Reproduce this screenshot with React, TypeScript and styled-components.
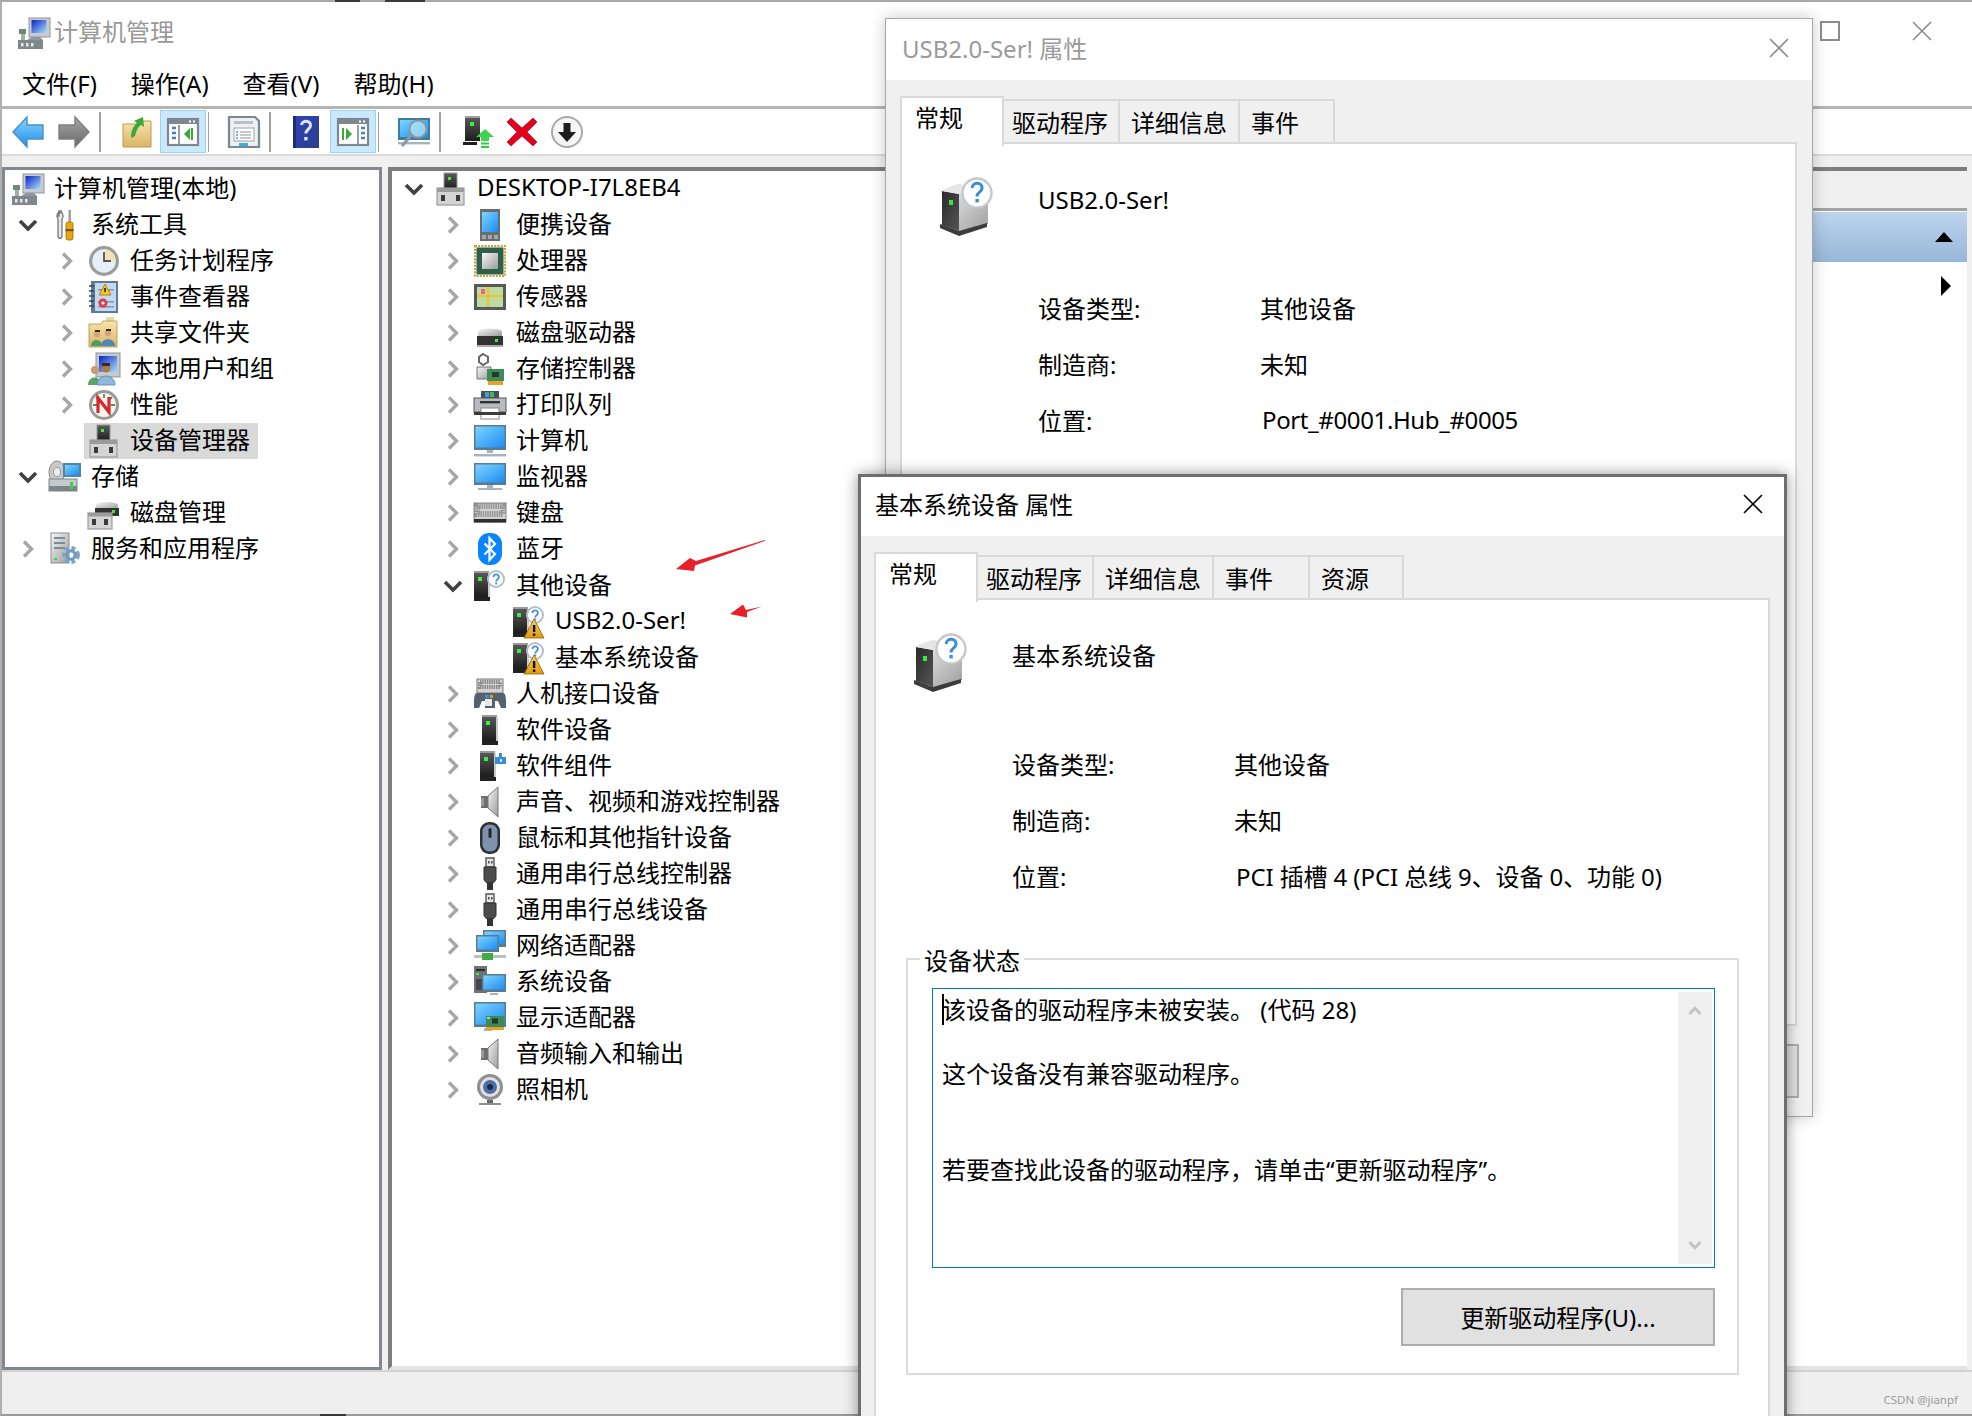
import React from "react";
import styled, { createGlobalStyle } from "styled-components";

const Global = createGlobalStyle`
  html, body { margin: 0; padding: 0; background: #fff; }
  body { font-family: "Noto Sans", "Noto Sans CJK SC", sans-serif; font-size: 24px; color: #000; }
  #root { width: 1972px; height: 1416px; overflow: hidden; }
  * { box-sizing: border-box; }
`;

const Desktop = styled.div`
  position: relative;
  width: 1972px;
  height: 1416px;
  overflow: hidden;
  background: #fff;
`;

const MainWindow = styled.div`
  display: flex;
  flex-direction: column;
  width: 100%;
  height: 100%;
  border-top: 2px solid #a9a9a9;
  border-left: 2px solid #b0b0b0;
  border-bottom: 2px solid #9a9a9a;
`;

const TitleBar = styled.div`
  display: flex;
  align-items: center;
  flex: none;
  height: 62px;
  padding: 0 40px 0 16px;
  color: #999;
  gap: 4px;
`;

const Caption = styled.span<{ $lift?: number }>`
  margin-bottom: ${(p) => p.$lift ?? 0}px;
`;

const WindowControls = styled.div`
  display: flex;
  align-items: center;
  gap: 72px;
  margin-left: auto;
  margin-top: -4px;
`;

const MaxBox = styled.div`
  width: 20px;
  height: 20px;
  border: 2px solid #8c8c8c;
`;

const MenuBar = styled.div`
  display: flex;
  flex: none;
  align-items: center;
  gap: 34px;
  height: 45px;
  padding: 0 0 5px 20px;
  border-bottom: 3px solid #b4b4b4;
`;

const Toolbar = styled.div`
  display: flex;
  flex: none;
  align-items: center;
  height: 47px;
  padding-left: 3px;
  border-bottom: 2px solid #dadada;
`;

const ToolButton = styled.div<{ $active?: boolean; $w?: number }>`
  display: flex;
  align-items: center;
  justify-content: center;
  flex: none;
  width: ${(p) => p.$w ?? 46}px;
  height: 43px;
  background: ${(p) => (p.$active ? "#cce8ff" : "transparent")};
  border: 1px solid ${(p) => (p.$active ? "#99d1ff" : "transparent")};
`;

const ToolSep = styled.div<{ $r?: number }>`
  flex: none;
  width: 1.5px;
  height: 40px;
  margin: 0 ${(p) => p.$r ?? 12}px 0 2px;
  background: #a0a0a0;
`;

const PaneArea = styled.div`
  display: flex;
  flex: 1;
  min-height: 0;
  gap: 6px;
  padding-top: 11px;
  background: #f0f0f0;
`;

const LeftPane = styled.div`
  flex: none;
  width: 380px;
  background: #fff;
  border: 3px solid #828790;
  padding-top: 1px;
`;

const RightPane = styled.div`
  display: flex;
  flex: 1;
  margin-right: 5px;
  background: #fff;
  border-top: 4px solid #7d7d7d;
  border-left: 4px solid #7f7f7f;
  border-bottom: 4px solid #e3e3e3;
`;

const DeviceTree = styled.div`
  flex: 1;
`;

const ActionPane = styled.div`
  flex: none;
  width: 300px;
  display: flex;
  flex-direction: column;
`;

const ActionTop = styled.div`
  flex: none;
  height: 40px;
  background: #f0f0f0;
  border-bottom: 3px solid #a3a3a3;
`;

const ActionHeader = styled.div`
  display: flex;
  align-items: center;
  justify-content: flex-end;
  flex: none;
  height: 50px;
  padding-right: 14px;
  margin-top: 1px;
  background: linear-gradient(#bcd4ee, #98b6d8);
`;

const ActionRow = styled.div`
  display: flex;
  align-items: center;
  justify-content: flex-end;
  height: 46px;
  padding: 0 16px 0 0;
`;

const TriUp = styled.div`
  width: 0;
  height: 0;
  border-left: 9px solid transparent;
  border-right: 9px solid transparent;
  border-bottom: 10px solid #000;
`;

const TriRight = styled.div`
  width: 0;
  height: 0;
  border-top: 10px solid transparent;
  border-bottom: 10px solid transparent;
  border-left: 10px solid #000;
  margin-top: 2px;
`;

const StatusBar = styled.div`
  position: relative;
  flex: none;
  height: 44px;
  background: #efefef;
  border-top: 2px solid #d2d2d2;
`;

const Watermark = styled.div`
  position: absolute;
  right: 14px;
  top: 20px;
  font-size: 11.5px;
  line-height: 16px;
  color: #9c9c9c;
`;

const Row = styled.div<{ $pad: number }>`
  display: flex;
  align-items: center;
  height: 36.06px;
  margin-left: ${(p) => p.$pad}px;
  white-space: nowrap;
`;

const ChevBox = styled.div`
  display: flex;
  align-items: center;
  justify-content: center;
  flex: none;
  width: 24px;
  height: 24px;
`;

const Label = styled.div<{ $selected?: boolean }>`
  display: flex;
  align-items: center;
  gap: 10px;
  height: 36px;
  margin-left: 5px;
  padding: 0 8px 0 4px;
  background: ${(p) => (p.$selected ? "#d9d9d9" : "transparent")};
`;

const Svg = styled.svg<{ $w?: number; $h?: number }>`
  display: block;
  flex: none;
  width: ${(p) => p.$w ?? 32}px;
  height: ${(p) => p.$h ?? 32}px;
  overflow: visible;
`;

const DefsHolder = styled.svg`
  position: absolute;
  width: 0;
  height: 0;
`;

const Annotations = styled.svg`
  position: absolute;
  left: 670px;
  top: 530px;
  width: 100px;
  height: 95px;
`;

const EdgeMark = styled.div<{ $x: number; $w: number; $top?: boolean }>`
  position: absolute;
  left: ${(p) => p.$x}px;
  ${(p) => (p.$top ? "top: 0;" : "bottom: 0;")}
  width: ${(p) => p.$w}px;
  height: 2px;
  background: #3a3a3a;
`;

const Dialog = styled.div<{ $x: number; $y: number; $w: number; $h: number; $active?: boolean }>`
  position: absolute;
  left: ${(p) => p.$x}px;
  top: ${(p) => p.$y}px;
  width: ${(p) => p.$w}px;
  height: ${(p) => p.$h}px;
  display: flex;
  flex-direction: column;
  background: #f0f0f0;
  border: ${(p) => (p.$active ? "3px solid #6e6e6e" : "1px solid #a6a6a6")};
  box-shadow: 0 0 14px rgba(0, 0, 0, ${(p) => (p.$active ? 0.42 : 0.22)});
`;

const DialogTitle = styled.div<{ $active?: boolean }>`
  display: flex;
  align-items: center;
  justify-content: space-between;
  flex: none;
  height: ${(p) => (p.$active ? 59 : 61)}px;
  padding: 0 ${(p) => (p.$active ? 21 : 23)}px 0 ${(p) => (p.$active ? 14 : 16)}px;
  background: #fff;
  color: ${(p) => (p.$active ? "#000" : "#9a9a9a")};
`;

const CloseWrap = styled.div<{ $active?: boolean }>`
  margin-bottom: ${(p) => (p.$active ? 5 : 3)}px;
`;

const DialogBody = styled.div<{ $active?: boolean }>`
  display: flex;
  flex-direction: column;
  flex: 1;
  min-height: 0;
  padding: 16px ${(p) => (p.$active ? 14 : 15)}px 0 ${(p) => (p.$active ? 13 : 14)}px;
`;

const Tabs = styled.div`
  display: flex;
  align-items: flex-end;
  flex: none;
  height: 48px;
  position: relative;
  z-index: 1;
  margin-bottom: -2px;
`;

const Tab = styled.div<{ $w: number; $selected?: boolean }>`
  flex: none;
  width: ${(p) => p.$w}px;
  height: ${(p) => (p.$selected ? 50 : 45)}px;
  margin-bottom: ${(p) => (p.$selected ? -2 : 0)}px;
  padding: ${(p) => (p.$selected ? "2px 0 0 13px" : "4px 0 0 11px")};
  line-height: 36px;
  background: ${(p) => (p.$selected ? "#fff" : "#f0f0f0")};
  border: 2px solid #d9d9d9;
  border-left-width: ${(p) => (p.$selected ? 2 : 0)}px;
  border-bottom: ${(p) => (p.$selected ? "none" : "2px solid #d9d9d9")};
  white-space: nowrap;
  &:nth-child(2) {
    padding-left: 8px;
  }
`;

const TabPanel = styled.div<{ $h?: number }>`
  flex: ${(p) => (p.$h ? "none" : "1")};
  height: ${(p) => (p.$h ? `${p.$h}px` : "auto")};
  padding: 31px 0 0 38px;
  background: #fff;
  border: 2px solid #d9d9d9;
  min-height: 0;
`;

const DeviceHeader = styled.div`
  display: flex;
  align-items: flex-start;
  gap: 44px;
  height: 60px;
  line-height: 32px;
`;

const DeviceIcon = styled.div`
  margin-top: 2px;
`;

const DeviceName = styled.div`
  margin-top: 9px;
`;

const PropGrid = styled.div`
  display: grid;
  grid-template-columns: 222px 1fr;
  grid-auto-rows: 56px;
  align-items: center;
  margin: 44px 0 0 98px;
`;

const PropValue = styled.div<{ $nudge?: boolean; $tight?: number }>`
  padding-left: ${(p) => (p.$nudge ? 2 : 0)}px;
  letter-spacing: ${(p) => p.$tight ?? 0}px;
  white-space: nowrap;
`;

const StatusGroup = styled.fieldset`
  margin: 40px 29px 0 -8px;
  padding: 0 22px 27px 24px;
  border: 2px solid #dcdcdc;
`;

const StatusLegend = styled.legend`
  margin-left: -12px;
  padding: 4px 4px 0;
  line-height: 28px;
`;

const StatusBox = styled.div`
  position: relative;
  display: flex;
  height: 280px;
  margin-top: 13px;
  padding: 3px 2px 3px 3px;
  border: 1px solid #0078d7;
  background: #fff;
`;

const StatusText = styled.div`
  flex: 1;
  padding: 2px 0 0 6px;
  line-height: 32px;
  white-space: pre;
`;

const Caret = styled.div`
  position: absolute;
  left: 9px;
  top: 5px;
  width: 2px;
  height: 31px;
  background: #000;
`;

const ScrollTrack = styled.div`
  display: flex;
  flex-direction: column;
  justify-content: space-between;
  align-items: center;
  flex: none;
  width: 34px;
  padding: 12px 0;
  background: #f0f0f0;
`;

const Actions = styled.div`
  display: flex;
  justify-content: flex-end;
  margin-top: 20px;
`;

const PushButton = styled.div`
  display: flex;
  align-items: center;
  justify-content: center;
  width: 314px;
  height: 58px;
  padding-bottom: 2px;
  background: #e1e1e1;
  border: 2px solid #adadad;
`;

const FooterRow = styled.div`
  display: flex;
  justify-content: flex-end;
  flex: none;
  height: 91px;
  padding: 18px 0 0;
`;

const FooterButton = styled.div`
  width: 140px;
  height: 54px;
  margin-right: -2px;
  background: #e1e1e1;
  border: 2px solid #adadad;
`;

const Defs = () => (
  <DefsHolder>
    <defs>
      <linearGradient id="scr" x1="0" y1="0" x2="1" y2="1">
        <stop offset="0" stopColor="#7fd4ff" />
        <stop offset="1" stopColor="#1b8cf0" />
      </linearGradient>
      <linearGradient id="silver" x1="0" y1="0" x2="1" y2="1">
        <stop offset="0" stopColor="#f6f6f6" />
        <stop offset="1" stopColor="#9c9c9c" />
      </linearGradient>
      <linearGradient id="dark" x1="0" y1="0" x2="0" y2="1">
        <stop offset="0" stopColor="#5c5c5c" />
        <stop offset="1" stopColor="#1c1c1c" />
      </linearGradient>
      <linearGradient id="tan" x1="0" y1="0" x2="0" y2="1">
        <stop offset="0" stopColor="#f8e4ac" />
        <stop offset="1" stopColor="#dcb465" />
      </linearGradient>
      <linearGradient id="blueDeep" x1="0" y1="0" x2="1" y2="1">
        <stop offset="0" stopColor="#0a22c8" />
        <stop offset="1" stopColor="#a8e0f8" />
      </linearGradient>
      <linearGradient id="arrowBlue" x1="0" y1="0" x2="0" y2="1">
        <stop offset="0" stopColor="#8ad6ff" />
        <stop offset="1" stopColor="#1e8ee8" />
      </linearGradient>
      <linearGradient id="arrowGrey" x1="0" y1="0" x2="0" y2="1">
        <stop offset="0" stopColor="#a8a8a8" />
        <stop offset="1" stopColor="#666" />
      </linearGradient>
      <linearGradient id="helpBlue" x1="0" y1="0" x2="1" y2="1">
        <stop offset="0" stopColor="#2f44b8" />
        <stop offset="1" stopColor="#2a3f8c" />
      </linearGradient>
      <linearGradient id="towerFront" x1="0" y1="0" x2="1" y2="1">
        <stop offset="0" stopColor="#2a2a2a" />
        <stop offset="1" stopColor="#555" />
      </linearGradient>
      <linearGradient id="warnFill" x1="0" y1="0" x2="0" y2="1">
        <stop offset="0" stopColor="#f9d060" />
        <stop offset="1" stopColor="#e09a10" />
      </linearGradient>
    </defs>
  </DefsHolder>
);

const Tower = ({ x = 8 }: { x?: number }) => (
  <g transform={`translate(${x} 1)`}>
    <rect width="15" height="26" fill="url(#dark)" />
    <rect width="15" height="2" fill="#9a9a9a" />
    <rect x="4" y="6" width="4" height="4" fill="#3bf03b" />
    <rect y="26" width="16" height="4" fill="#222" />
    <rect x="14" y="2" width="2" height="24" fill="#c9c9c9" />
  </g>
);

const Bubble = () => (
  <g>
    <circle cx="22" cy="9" r="8" fill="#fff" stroke="#b4bec8" strokeWidth="2" />
    <path d="M19.4 7c.4-3.6 5.8-3.4 5.5.2-.2 2.1-2.7 1.9-2.7 4.2" fill="none" stroke="#4a90d9" strokeWidth="1.9" />
    <rect x="21.2" y="12.4" width="2" height="2" fill="#4a90d9" />
  </g>
);

const Warn = () => (
  <g>
    <path d="M21 13l10 19H11z" fill="url(#warnFill)" stroke="#8a6000" strokeWidth=".8" />
    <rect x="19.9" y="19" width="2.4" height="7" fill="#111" />
    <rect x="19.9" y="27.5" width="2.4" height="2.4" fill="#111" />
  </g>
);

const Monitor = ({ x = 0, y = 0, w = 32, h = 24 }: { x?: number; y?: number; w?: number; h?: number }) => (
  <g>
    <rect x={x} y={y} width={w} height={h} fill="#5a7a90" />
    <rect x={x + 1.5} y={y + 1.5} width={w - 3} height={h - 4} fill="url(#scr)" />
  </g>
);

const Pcicard = ({ x, y }: { x: number; y: number }) => (
  <g transform={`translate(${x} ${y})`}>
    <rect width="18" height="11" fill="#3f8a58" />
    <rect x="6" y="2.5" width="6" height="5" fill="#1e3c2a" />
    <rect x="1" y="1" width="3" height="2" fill="#9ce0a8" />
    <rect y="11" width="18" height="3" fill="#e7a22c" />
  </g>
);

const Gear = ({ x, y, r = 6 }: { x: number; y: number; r?: number }) => (
  <g transform={`translate(${x} ${y})`}>
    <circle r={r} fill="none" stroke="#7ba4c8" strokeWidth={r * 0.55} strokeDasharray={`${r * 0.55} ${r * 0.4}`} />
    <circle r={r * 0.6} fill="none" stroke="#6e9cc0" strokeWidth={r * 0.45} />
  </g>
);

const MgmtGlyph = () => (
  <>
    <rect x="11" y="1" width="21" height="19" fill="#c8ccd0" stroke="#8d9499" />
    <rect x="13.5" y="3" width="15" height="13" fill="url(#blueDeep)" />
    <path d="M14 20l-5 3h16l-3-3z" fill="#8f989c" />
    <rect x="0" y="23" width="25" height="9" fill="#7e878c" />
    <rect x="3" y="26" width="2.5" height="3.5" fill="#e8e8e8" />
    <rect x="8" y="26" width="2.5" height="3.5" fill="#e8e8e8" />
    <rect x="13" y="26" width="2.5" height="3.5" fill="#e8e8e8" />
    <rect x="1" y="12" width="7" height="5" fill="#6e8a76" />
    <rect x="3" y="17" width="4" height="6" fill="#9fb2a4" />
  </>
);

const DesktopBase = () => (
  <>
    <rect x="9" y="0" width="13" height="16" fill="url(#dark)" stroke="#999" strokeWidth="1" />
    <rect x="13" y="4" width="3" height="3" fill="#3bf03b" />
    <rect x="2" y="15" width="27" height="17" fill="#d4d4d4" stroke="#9b9b9b" strokeWidth="1.2" />
    <rect x="2" y="15" width="27" height="4" fill="#9b9b9b" />
    <rect x="6" y="22" width="4" height="6" fill="#3a3a3a" />
    <rect x="21" y="22" width="4" height="6" fill="#3a3a3a" />
  </>
);

const Speaker = () => (
  <>
    <path d="M7 10h7v12H7z" fill="#6d6d6d" />
    <path d="M14 10L24 1v30L14 22z" fill="url(#silver)" stroke="#777" strokeWidth="1" />
    <rect x="7" y="12" width="3" height="8" fill="#9a9a9a" />
  </>
);

const UsbPlug = () => (
  <>
    <path d="M12 0h8v9h-8z" fill="#e6e6e6" stroke="#555" strokeWidth="1.4" />
    <rect x="14" y="3" width="1.6" height="2.5" fill="#555" />
    <rect x="17" y="3" width="1.6" height="2.5" fill="#555" />
    <path d="M10 9h12v12c0 2-2 3-3 4h-6c-1-1-3-2-3-4z" fill="#4c4c4c" stroke="#2e2e2e" />
    <rect x="13" y="24" width="6" height="8" fill="#333" />
  </>
);

type IconName = keyof typeof glyphs;

const glyphs = {
  mgmt: <MgmtGlyph />,
  tools: (
    <>
      <path d="M12 2c-4 1-5 5-3 8v17c0 3 4 3 4 0V10c2-3 1-7-3-8v5h-1z" fill="#e8e8e8" stroke="#777" strokeWidth="1.3" />
      <rect x="19.5" y="1" width="2.4" height="12" fill="#9a9a9a" />
      <rect x="17" y="13" width="7" height="18" rx="2" fill="#e8a80c" stroke="#9a6a00" strokeWidth=".8" />
      <rect x="16.5" y="20" width="8" height="2.2" fill="#7a5300" />
    </>
  ),
  clock: (
    <>
      <circle cx="16" cy="16" r="15" fill="#9c9c9c" />
      <circle cx="16" cy="16" r="11.8" fill="#e6f0f8" />
      <path d="M16 4.2a11.8 11.8 0 0 1 11.8 11.8H16z" fill="#f3e2b8" />
      <path d="M16 7v9h7" fill="none" stroke="#555" strokeWidth="1.8" />
    </>
  ),
  log: (
    <>
      <rect x="3" y="0" width="27" height="32" fill="#5a7a9e" />
      <rect x="7" y="2" width="21" height="28" fill="#c6d8ee" />
      <rect x="10" y="8" width="16" height="1.6" fill="#7f9cc0" />
      <rect x="10" y="20" width="16" height="1.6" fill="#7f9cc0" />
      <rect x="10" y="25" width="16" height="1.6" fill="#7f9cc0" />
      <path d="M17 3l6 11H11z" fill="#f5c518" stroke="#9a7a00" strokeWidth=".8" />
      <rect x="16.2" y="7" width="1.6" height="4" fill="#222" />
      <circle cx="15" cy="22" r="4.5" fill="#d8404a" />
      <circle cx="15" cy="22" r="1.6" fill="#fff" />
      <path d="M1 5h5M1 10h5M1 15h5M1 20h5M1 25h5" stroke="#444" strokeWidth="1.4" />
    </>
  ),
  shared: (
    <>
      <path d="M18 0h8v7h-8z" fill="#e8d9a8" />
      <path d="M1 7h12l2-3h14v26H1z" fill="url(#tan)" stroke="#b39248" strokeWidth=".8" />
      <circle cx="9" cy="17" r="3.2" fill="#d4a27c" />
      <path d="M3 29c0-8 11-8 11 0z" fill="#4d9e62" />
      <circle cx="20" cy="16" r="3.2" fill="#d4a27c" />
      <path d="M13 29c0-9 14-9 14 0z" fill="#4f86b8" />
      <rect x="7" y="13" width="5" height="2" fill="#3a2a1c" />
      <rect x="18" y="12" width="5" height="2" fill="#3a2a1c" />
    </>
  ),
  users: (
    <>
      <rect x="8" y="0" width="24" height="24" fill="#c4cbd0" stroke="#8d9499" />
      <rect x="11" y="3" width="18" height="16" fill="url(#blueDeep)" />
      <circle cx="7" cy="17" r="4" fill="#c99a72" />
      <path d="M0 32c0-10 13-10 13 0z" fill="#5aa564" />
      <circle cx="18" cy="15" r="4.5" fill="#a87650" />
      <rect x="14" y="10" width="8" height="3" fill="#3a2a1c" />
      <path d="M9 32c0-12 18-12 18 0z" fill="#8fb8dc" stroke="#5c86ac" strokeWidth=".8" />
    </>
  ),
  perf: (
    <>
      <circle cx="16" cy="16" r="15" fill="#9a9a9a" />
      <circle cx="16" cy="16" r="12" fill="#f5f5ee" />
      <path d="M8 8l3 3M24 8l-3 3M16 5v4M5 16h4M27 16h-4" stroke="#5a8a5e" strokeWidth="1.8" />
      <path d="M10 24V9l11 14V8" fill="none" stroke="#d8262c" strokeWidth="3.2" />
    </>
  ),
  devmgr: <DesktopBase />,
  storage: (
    <>
      <ellipse cx="8" cy="11" rx="8" ry="11" fill="#c9c9c9" stroke="#8a8a8a" />
      <ellipse cx="8" cy="11" rx="3.5" ry="4.5" fill="#eee" stroke="#999" />
      <rect x="14" y="2" width="18" height="14" fill="#4e86a8" />
      <rect x="16" y="4" width="14" height="10" fill="url(#scr)" />
      <rect x="0" y="18" width="28" height="12" fill="#c6cacc" stroke="#7c858b" />
      <rect x="0" y="25" width="28" height="5" fill="#7c858b" />
      <rect x="21" y="21" width="3" height="7" fill="#3ed24e" />
    </>
  ),
  disk: (
    <>
      <path d="M8 8c1-4 21-4 22 0v4H8z" fill="url(#silver)" />
      <rect x="7" y="11" width="24" height="8" fill="#333" />
      <rect x="24" y="13" width="3" height="3" fill="#3bf03b" />
      <rect x="0" y="16" width="24" height="16" fill="#d4d4d4" stroke="#9b9b9b" strokeWidth="1.2" />
      <rect x="0" y="16" width="24" height="3.5" fill="#9b9b9b" />
      <rect x="4" y="22" width="4" height="6" fill="#3a3a3a" />
      <rect x="16" y="22" width="4" height="6" fill="#3a3a3a" />
    </>
  ),
  services: (
    <>
      <rect x="2" y="0" width="18" height="30" fill="url(#silver)" stroke="#8a8f94" />
      <rect x="5" y="4" width="11" height="2" fill="#7b8b98" />
      <rect x="5" y="9" width="11" height="2" fill="#7b8b98" />
      <rect x="5" y="14" width="11" height="2" fill="#7b8b98" />
      <rect x="5" y="25" width="3" height="2" fill="#3ed24e" />
      <Gear x={22} y={22} r={7} />
    </>
  ),
  portable: (
    <>
      <rect x="6" y="0" width="20" height="32" fill="#666d73" />
      <rect x="8" y="3" width="16" height="20" fill="url(#scr)" />
      <rect x="8" y="26" width="4" height="4" fill="#a6a6a6" />
      <rect x="14" y="26" width="4" height="4" fill="#a6a6a6" />
      <rect x="20" y="26" width="4" height="4" fill="#a6a6a6" />
    </>
  ),
  cpu: (
    <>
      <rect x="1" y="1" width="30" height="30" fill="none" stroke="#c8a030" strokeWidth="2" strokeDasharray="2 1.2" />
      <rect x="2.5" y="2.5" width="27" height="27" fill="#2f5f48" />
      <rect x="8" y="8" width="16" height="16" fill="url(#silver)" />
    </>
  ),
  sensor: (
    <>
      <rect x="0" y="3" width="32" height="26" fill="#55595c" />
      <rect x="3" y="6" width="26" height="20" fill="#bfdca0" />
      <path d="M3 15h26M14 6v20" stroke="#e6c240" strokeWidth="2.4" />
      <rect x="7" y="8" width="4" height="5" fill="#e86a6a" />
    </>
  ),
  drive: (
    <>
      <path d="M4 14c2-3 22-3 24 0v5H4z" fill="url(#silver)" />
      <rect x="3" y="19" width="26" height="9" fill="#323232" />
      <rect x="21" y="22" width="3" height="3" fill="#3bf03b" />
      <rect x="3" y="28" width="26" height="2" fill="#aaa" />
    </>
  ),
  storctl: (
    <>
      <path d="M9 1l5 3v5l-5 3-4-3V4z" fill="#fff" stroke="#666" strokeWidth="2" />
      <path d="M3 14h14v12H3z" fill="url(#silver)" stroke="#777" />
      <rect x="13" y="16" width="17" height="12" fill="#3f8a58" />
      <rect x="18" y="19" width="7" height="5" fill="#1e3c2a" />
      <rect x="14" y="28" width="15" height="4" fill="#e7a22c" />
    </>
  ),
  printer: (
    <>
      <rect x="7" y="2" width="18" height="9" fill="#4a4f54" />
      <rect x="11" y="3" width="4" height="5" fill="#3b9ee6" />
      <rect x="16" y="3" width="4" height="5" fill="#3bb868" />
      <rect x="0" y="9" width="32" height="14" fill="#b8bcc0" stroke="#555" />
      <rect x="6" y="12" width="20" height="2.4" fill="#333" />
      <rect x="7" y="19" width="18" height="11" fill="#fff" stroke="#888" />
      <rect x="0" y="23" width="32" height="3" fill="#3c3c3c" />
    </>
  ),
  computer: (
    <>
      <Monitor h={25} />
      <rect x="13" y="25" width="6" height="3" fill="#a8b4bc" />
      <rect x="0" y="29" width="32" height="2.4" fill="#a8b4bc" />
    </>
  ),
  monitor: (
    <>
      <Monitor y={2} h={22} />
      <rect x="13" y="24" width="6" height="3" fill="#a8b4bc" />
      <rect x="4" y="27" width="24" height="2" fill="#a8b4bc" />
    </>
  ),
  keyboard: (
    <>
      <rect x="0" y="6" width="32" height="19" fill="#d2d2d2" stroke="#8a8a8a" />
      <rect x="3" y="9" width="26" height="8" fill="none" stroke="#777" strokeWidth="6" strokeDasharray="1.4 .9" opacity=".7" />
      <rect x="0" y="22" width="32" height="3.5" fill="#2e2e2e" />
    </>
  ),
  bluetooth: (
    <>
      <rect x="4" y="0" width="24" height="32" rx="11" fill="#0a84ff" />
      <path d="M10.5 10.5L21 21l-5.5 6V5l5.5 6L10.5 21.5" fill="none" stroke="#fff" strokeWidth="2.2" />
    </>
  ),
  other: (
    <>
      <Tower x={0} />
      <Bubble />
    </>
  ),
  warn: (
    <>
      <Tower x={0} />
      <Bubble />
      <Warn />
    </>
  ),
  hid: (
    <>
      <rect x="3" y="1" width="26" height="14" fill="#d2d2d2" stroke="#7c7c7c" />
      <rect x="6" y="4" width="20" height="5" fill="none" stroke="#666" strokeWidth="4" strokeDasharray="1.4 .9" opacity=".7" />
      <path d="M3 15h26c2 0 3 3 3 9v6h-5l-3-7h-3v7h-10v-7H8l-3 7H0v-6c0-6 1-9 3-9z" fill="#55616b" />
      <rect x="11" y="17" width="4" height="3" fill="#3a8ee0" />
      <rect x="16" y="17" width="3" height="3" fill="#e2a030" />
      <rect x="11" y="21" width="7" height="7" fill="#e8e8e8" />
    </>
  ),
  soft: <Tower x={8} />,
  softComp: (
    <>
      <Tower x={6} />
      <path d="M21 7h4V3h3v4h4v7H21z" fill="#3a8ed8" />
      <rect x="26" y="9" width="2" height="3" fill="#cde6fa" />
    </>
  ),
  speaker: <Speaker />,
  mouse: (
    <>
      <rect x="6" y="0" width="20" height="32" rx="9" fill="#2d3034" />
      <rect x="8.5" y="2.5" width="15" height="27" rx="7" fill="#7f92ab" />
      <rect x="14.5" y="6" width="3" height="10" rx="1.5" fill="#20232a" />
    </>
  ),
  usb: <UsbPlug />,
  network: (
    <>
      <Monitor x={9} y={0} w={23} h={17} />
      <Monitor x={2} y={5} w={23} h={17} />
      <rect x="0" y="25" width="32" height="3" fill="#b8c4ba" />
      <rect x="8" y="23" width="11" height="7" fill="#3eaa48" />
    </>
  ),
  system: (
    <>
      <rect x="0" y="0" width="13" height="27" fill="#6e7276" />
      <rect x="2" y="3" width="9" height="2" fill="#2a2a2a" />
      <rect x="2" y="7" width="3" height="2" fill="#3bf03b" />
      <rect x="2" y="13" width="9" height="11" fill="#45484c" />
      <Monitor x={8} y={8} w={24} h={18} />
      <rect x="16" y="27" width="8" height="2" fill="#a8b4bc" />
    </>
  ),
  display: (
    <>
      <Monitor y={0} h={25} />
      <rect x="10" y="26" width="8" height="3" fill="#a8b4bc" />
      <Pcicard x={12} y={14} />
    </>
  ),
  camera: (
    <>
      <circle cx="16" cy="13" r="13" fill="#8f8f8f" />
      <circle cx="16" cy="13" r="10" fill="#e1e1e1" />
      <circle cx="16" cy="13" r="7" fill="#4a6fa8" />
      <circle cx="16" cy="13" r="3" fill="#1c2a48" />
      <rect x="13" y="26" width="6" height="3" fill="#666" />
      <rect x="5" y="29" width="22" height="2" fill="#8f8f8f" />
    </>
  ),
  back: (
    <>
      <path d="M1 16L15 1v8h16v14H15v8z" fill="url(#arrowBlue)" stroke="#4a90c8" strokeWidth="1.4" />
    </>
  ),
  forward: (
    <>
      <path d="M31 16L17 1v8H1v14h16v8z" fill="url(#arrowGrey)" stroke="#7e7e7e" strokeWidth="1.4" />
    </>
  ),
  upFolder: (
    <>
      <path d="M2 8h14l3-3h11v26H2z" fill="url(#tan)" stroke="#bd9a50" strokeWidth="1" />
      <path d="M10 22c0-7 2-12 6-15l-3-2 9-4 1 10-3-2c-3 2-5 6-6 11z" fill="#3aa83a" />
    </>
  ),
  panesLeft: (
    <>
      <rect x="1" y="3" width="30" height="26" fill="#fff" stroke="#7d8790" strokeWidth="2.2" />
      <rect x="1" y="3" width="30" height="5" fill="#7d8790" />
      <path d="M12 9v19" stroke="#7d8790" strokeWidth="1.6" />
      <path d="M5 12h4M5 17h4M5 22h4" stroke="#4a7fb8" strokeWidth="2.4" />
      <path d="M23 12v12l-6-6z" fill="#3aa83a" />
      <rect x="24" y="12" width="2" height="12" fill="#3aa83a" />
      <rect x="22" y="4.5" width="2" height="2" fill="#fff" />
      <rect x="26" y="4.5" width="2" height="2" fill="#fff" />
    </>
  ),
  panesRight: (
    <>
      <rect x="1" y="3" width="30" height="26" fill="#fff" stroke="#7d8790" strokeWidth="2.2" />
      <rect x="1" y="3" width="30" height="5" fill="#7d8790" />
      <path d="M21 9v19" stroke="#7d8790" strokeWidth="1.6" />
      <path d="M24 12h4M24 17h4M24 22h4" stroke="#4a7fb8" strokeWidth="2.4" />
      <path d="M9 12v12l6-6z" fill="#3aa83a" />
      <rect x="5" y="12" width="2" height="12" fill="#3aa83a" />
      <rect x="22" y="4.5" width="2" height="2" fill="#fff" />
      <rect x="26" y="4.5" width="2" height="2" fill="#fff" />
    </>
  ),
  props: (
    <>
      <path d="M1 1h26l4 4v26H1z" fill="#eef0f2" stroke="#7d8790" strokeWidth="2.2" />
      <rect x="6" y="5" width="19" height="3" fill="#b9c1c8" />
      <rect x="6" y="12" width="20" height="13" fill="#fff" stroke="#9aa3aa" />
      <path d="M12 16h11M12 19h11M12 22h11" stroke="#8a94a0" strokeWidth="1.2" />
      <path d="M8 16h2M8 19h2M8 22h2" stroke="#3a9ee6" strokeWidth="1.4" />
      <rect x="11" y="27" width="9" height="3" fill="#3ab0e8" />
    </>
  ),
  help: (
    <>
      <rect x="3" y="0" width="26" height="32" fill="url(#helpBlue)" />
      <rect x="3" y="0" width="3" height="32" fill="#1e2c78" />
      <path d="M11.5 9c.5-5 9.5-5 9 .6-.3 3.6-4.6 3.6-4.6 8" fill="none" stroke="#dfe4ff" strokeWidth="3" />
      <rect x="14.2" y="21" width="3.4" height="3.4" fill="#dfe4ff" />
    </>
  ),
  scan: (
    <>
      <rect x="0" y="2" width="32" height="22" fill="#3e7e9c" />
      <rect x="2" y="4" width="28" height="17" fill="url(#scr)" />
      <rect x="0" y="26" width="32" height="2.4" fill="#a8b4bc" />
      <circle cx="20" cy="13" r="8.5" fill="#b8e4f8" fillOpacity=".75" stroke="#8a98a2" strokeWidth="2" />
      <path d="M13.5 19L4 30" stroke="#8a98a2" strokeWidth="3" />
    </>
  ),
  upgrade: (
    <>
      <rect x="2" y="0" width="15" height="25" fill="url(#dark)" />
      <rect x="2" y="0" width="15" height="2" fill="#a0a0a0" />
      <rect x="7" y="6" width="4" height="4" fill="#3bf03b" />
      <rect x="0" y="26" width="14" height="3" fill="#1e1e1e" />
      <path d="M22 13l9 8h-5v4h-8v-4h-5z" fill="#3ed24e" />
      <rect x="18" y="26.5" width="8" height="2" fill="#2ecc40" />
      <rect x="18" y="30" width="8" height="2" fill="#2ecc40" />
    </>
  ),
  redX: (
    <path d="M5 2l11 10L27 2l4 4-10 10 10 10-4 4-11-10L5 30l-4-4 10-10L1 6z" fill="#e3001b" stroke="#a80014" strokeWidth=".6" />
  ),
  down: (
    <>
      <circle cx="16" cy="16" r="15" fill="#f6f6f6" stroke="#a9a9a9" strokeWidth="2" />
      <path d="M12.5 7h7v9H25L16 26 7 16h5.5z" fill="#1e1e1e" />
    </>
  ),
};

const Icon = ({ name }: { name: IconName }) => <Svg viewBox="0 0 32 32">{glyphs[name]}</Svg>;

const CloseX = ({ color = "#000" }: { color?: string }) => (
  <Svg $w={20} $h={20} viewBox="0 0 20 20">
    <path d="M1 1l18 18M19 1L1 19" fill="none" stroke={color} strokeWidth="1.6" />
  </Svg>
);

const BigDevice = () => (
  <Svg $w={54} $h={60} viewBox="0 0 54 60">
    <path d="M0 13l18-6 30 7v33L18 56z" fill="url(#silver)" />
    <path d="M2 14l17 3v37L2 48z" fill="url(#towerFront)" />
    <path d="M2 14L20 7l19 4-20 6z" fill="#e6e6e6" />
    <rect x="9" y="23" width="4" height="5" fill="#37e837" />
    <path d="M0 47l19 7 28-8v4l-28 9L0 51z" fill="#3c3c3c" />
    <circle cx="37" cy="16" r="14.5" fill="#fff" stroke="#c3c8cc" strokeWidth="2.4" />
    <path d="M32 11c.6-6.6 10.6-6.4 10 .4-.4 4-5 3.6-5 8" fill="none" stroke="#3a8ed8" strokeWidth="3" />
    <rect x="35.4" y="22" width="3.4" height="3.4" fill="#3a8ed8" />
  </Svg>
);

const Chevron = ({ open }: { open?: boolean }) =>
  open ? (
    <Svg $w={20} $h={14} viewBox="0 0 20 14">
      <path d="M2 3l8 8 8-8" fill="none" stroke="#404040" strokeWidth="3.6" />
    </Svg>
  ) : (
    <Svg $w={12} $h={18} viewBox="0 0 12 18">
      <path d="M2 1.5l7.5 7.5L2 16.5" fill="none" stroke="#a6a6a6" strokeWidth="3.4" />
    </Svg>
  );

const ScrollArrow = ({ up }: { up?: boolean }) => (
  <Svg $w={14} $h={12} viewBox="0 0 14 12">
    <path d={up ? "M1.5 10l5.5-6 5.5 6" : "M1.5 2l5.5 6 5.5-6"} fill="none" stroke="#c2c2c2" strokeWidth="2.8" />
  </Svg>
);

type Chev = "open" | "closed" | "leaf" | "none";
interface Node {
  pad: number;
  chev: Chev;
  icon: IconName;
  text: string;
  selected?: boolean;
}

const TreeRow = ({ n }: { n: Node }) => (
  <Row $pad={n.pad}>
    {n.chev !== "none" && (
      <ChevBox>{n.chev !== "leaf" && <Chevron open={n.chev === "open"} />}</ChevBox>
    )}
    <Label $selected={n.selected}>
      <Icon name={n.icon} />
      <Caption $lift={5}>{n.text}</Caption>
    </Label>
  </Row>
);

const leftNodes: Node[] = [
  { pad: -2, chev: "none", icon: "mgmt", text: "计算机管理(本地)" },
  { pad: 11, chev: "open", icon: "tools", text: "系统工具" },
  { pad: 50, chev: "closed", icon: "clock", text: "任务计划程序" },
  { pad: 50, chev: "closed", icon: "log", text: "事件查看器" },
  { pad: 50, chev: "closed", icon: "shared", text: "共享文件夹" },
  { pad: 50, chev: "closed", icon: "users", text: "本地用户和组" },
  { pad: 50, chev: "closed", icon: "perf", text: "性能" },
  { pad: 50, chev: "leaf", icon: "devmgr", text: "设备管理器", selected: true },
  { pad: 11, chev: "open", icon: "storage", text: "存储" },
  { pad: 50, chev: "leaf", icon: "disk", text: "磁盘管理" },
  { pad: 11, chev: "closed", icon: "services", text: "服务和应用程序" },
];

const L1 = 49;
const rightNodes: Node[] = [
  { pad: 10, chev: "open", icon: "devmgr", text: "DESKTOP-I7L8EB4" },
  { pad: L1, chev: "closed", icon: "portable", text: "便携设备" },
  { pad: L1, chev: "closed", icon: "cpu", text: "处理器" },
  { pad: L1, chev: "closed", icon: "sensor", text: "传感器" },
  { pad: L1, chev: "closed", icon: "drive", text: "磁盘驱动器" },
  { pad: L1, chev: "closed", icon: "storctl", text: "存储控制器" },
  { pad: L1, chev: "closed", icon: "printer", text: "打印队列" },
  { pad: L1, chev: "closed", icon: "computer", text: "计算机" },
  { pad: L1, chev: "closed", icon: "monitor", text: "监视器" },
  { pad: L1, chev: "closed", icon: "keyboard", text: "键盘" },
  { pad: L1, chev: "closed", icon: "bluetooth", text: "蓝牙" },
  { pad: L1, chev: "open", icon: "other", text: "其他设备" },
  { pad: 88, chev: "leaf", icon: "warn", text: "USB2.0-Ser!" },
  { pad: 88, chev: "leaf", icon: "warn", text: "基本系统设备" },
  { pad: L1, chev: "closed", icon: "hid", text: "人机接口设备" },
  { pad: L1, chev: "closed", icon: "soft", text: "软件设备" },
  { pad: L1, chev: "closed", icon: "softComp", text: "软件组件" },
  { pad: L1, chev: "closed", icon: "speaker", text: "声音、视频和游戏控制器" },
  { pad: L1, chev: "closed", icon: "mouse", text: "鼠标和其他指针设备" },
  { pad: L1, chev: "closed", icon: "usb", text: "通用串行总线控制器" },
  { pad: L1, chev: "closed", icon: "usb", text: "通用串行总线设备" },
  { pad: L1, chev: "closed", icon: "network", text: "网络适配器" },
  { pad: L1, chev: "closed", icon: "system", text: "系统设备" },
  { pad: L1, chev: "closed", icon: "display", text: "显示适配器" },
  { pad: L1, chev: "closed", icon: "speaker", text: "音频输入和输出" },
  { pad: L1, chev: "closed", icon: "camera", text: "照相机" },
];

const tabsA: [string, number][] = [
  ["常规", 104],
  ["驱动程序", 116],
  ["详细信息", 120],
  ["事件", 95],
];
const tabsB: [string, number][] = [...tabsA.slice(0, 3), ["事件", 96], ["资源", 94]];

const TabStrip = ({ tabs }: { tabs: [string, number][] }) => (
  <Tabs>
    {tabs.map(([t, w], i) => (
      <Tab key={t} $w={w} $selected={i === 0}>
        {t}
      </Tab>
    ))}
  </Tabs>
);

const Props = ({ type, maker, place, tight }: { type: string; maker: string; place: string; tight: number }) => (
  <PropGrid>
    <div>设备类型:</div>
    <PropValue>{type}</PropValue>
    <div>制造商:</div>
    <PropValue>{maker}</PropValue>
    <div>位置:</div>
    <PropValue $nudge $tight={tight}>{place}</PropValue>
  </PropGrid>
);

export default function App() {
  return (
    <Desktop>
      <Global />
      <Defs />
      <MainWindow>
        <TitleBar>
          <Icon name="mgmt" />
          <Caption $lift={6}>计算机管理</Caption>
          <WindowControls>
            <MaxBox />
            <CloseX color="#8c8c8c" />
          </WindowControls>
        </TitleBar>
        <MenuBar>
          <span>文件(F)</span>
          <span>操作(A)</span>
          <span>查看(V)</span>
          <span>帮助(H)</span>
        </MenuBar>
        <Toolbar>
          <ToolButton><Icon name="back" /></ToolButton>
          <ToolButton><Icon name="forward" /></ToolButton>
          <ToolSep $r={13} />
          <ToolButton><Icon name="upFolder" /></ToolButton>
          <ToolButton $active><Icon name="panesLeft" /></ToolButton>
          <ToolSep />
          <ToolButton><Icon name="props" /></ToolButton>
          <ToolSep />
          <ToolButton $w={47}><Icon name="help" /></ToolButton>
          <ToolButton $active><Icon name="panesRight" /></ToolButton>
          <ToolSep />
          <ToolButton><Icon name="scan" /></ToolButton>
          <ToolSep $r={18} />
          <ToolButton $w={41}><Icon name="upgrade" /></ToolButton>
          <ToolButton $w={44}><Icon name="redX" /></ToolButton>
          <ToolButton><Icon name="down" /></ToolButton>
        </Toolbar>
        <PaneArea>
          <LeftPane>
            {leftNodes.map((n) => (
              <TreeRow key={n.text} n={n} />
            ))}
          </LeftPane>
          <RightPane>
            <DeviceTree>
              {rightNodes.map((n) => (
                <TreeRow key={n.text} n={n} />
              ))}
            </DeviceTree>
            <ActionPane>
              <ActionTop />
              <ActionHeader>
                <TriUp />
              </ActionHeader>
              <ActionRow>
                <TriRight />
              </ActionRow>
            </ActionPane>
          </RightPane>
        </PaneArea>
        <StatusBar>
          <Watermark>CSDN @jianpf</Watermark>
        </StatusBar>
      </MainWindow>

      <Annotations viewBox="670 530 100 95">
        <path d="M765 540 696 561 690 558 676 569 694 571 695 565.5 765 541z" fill="#e8202a" />
        <path d="M762 606.5 746 610 743 604.5 730 614 747 617.5 747 612z" fill="#e8202a" />
      </Annotations>
      <EdgeMark $x={335} $w={25} $top />
      <EdgeMark $x={385} $w={40} $top />
      <EdgeMark $x={320} $w={26} />

      <Dialog $x={885} $y={18} $w={928} $h={1099}>
        <DialogTitle>
          <Caption $lift={4}>USB2.0-Ser! 属性</Caption>
          <CloseWrap><CloseX color="#8c8c8c" /></CloseWrap>
        </DialogTitle>
        <DialogBody>
          <TabStrip tabs={tabsA} />
          <TabPanel $h={884}>
            <DeviceHeader>
              <DeviceIcon><BigDevice /></DeviceIcon>
              <DeviceName>USB2.0-Ser!</DeviceName>
            </DeviceHeader>
            <Props type="其他设备" maker="未知" place="Port_#0001.Hub_#0005" tight={-0.38} />
          </TabPanel>
          <FooterRow>
            <FooterButton />
          </FooterRow>
        </DialogBody>
      </Dialog>

      <Dialog $x={858} $y={474} $w={929} $h={1000} $active>
        <DialogTitle $active>
          <Caption $lift={6}>基本系统设备 属性</Caption>
          <CloseWrap $active><CloseX /></CloseWrap>
        </DialogTitle>
        <DialogBody $active>
          <TabStrip tabs={tabsB} />
          <TabPanel>
            <DeviceHeader>
              <DeviceIcon><BigDevice /></DeviceIcon>
              <DeviceName>基本系统设备</DeviceName>
            </DeviceHeader>
            <Props type="其他设备" maker="未知" place="PCI 插槽 4 (PCI 总线 9、设备 0、功能 0)" tight={-0.1} />
            <StatusGroup>
              <StatusLegend>设备状态</StatusLegend>
              <StatusBox>
                <Caret />
                <StatusText>{"该设备的驱动程序未被安装。 (代码 28)\n\n这个设备没有兼容驱动程序。\n\n\n若要查找此设备的驱动程序，请单击“更新驱动程序”。"}</StatusText>
                <ScrollTrack>
                  <ScrollArrow up />
                  <ScrollArrow />
                </ScrollTrack>
              </StatusBox>
              <Actions>
                <PushButton>更新驱动程序(U)...</PushButton>
              </Actions>
            </StatusGroup>
          </TabPanel>
        </DialogBody>
      </Dialog>
    </Desktop>
  );
}
